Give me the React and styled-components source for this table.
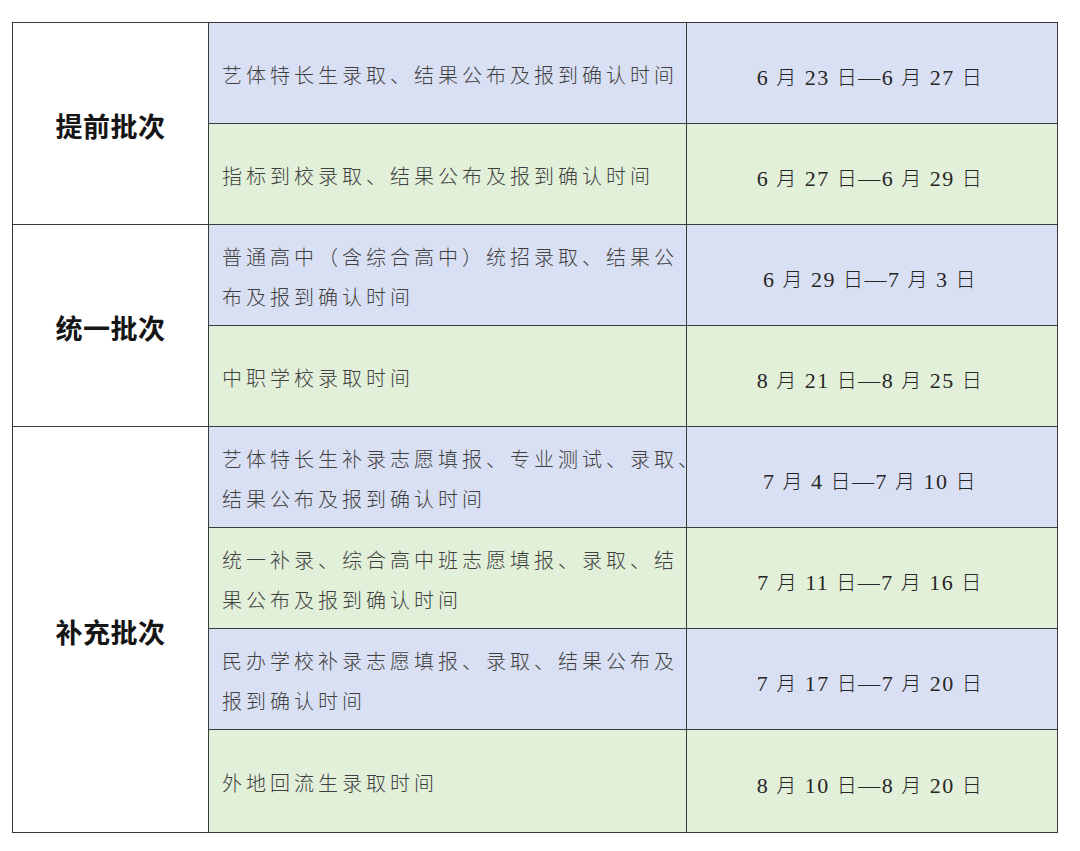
import React from "react";
import styled, { createGlobalStyle } from "styled-components";

const Global = createGlobalStyle`
  html, body { margin: 0; padding: 0; background: #ffffff; }
  body { font-family: "Noto Sans CJK SC", "Noto Sans", sans-serif; }
`;

const Page = styled.div`
  padding: 22px 0 0 12px;
`;

const Table = styled.table`
  border-collapse: collapse;
  table-layout: fixed;
  width: 1045px;
  border: 1.5px solid #555;
`;

const Cell = styled.td`
  border: 1px solid #3a3a3a;
  padding: 0;
  vertical-align: middle;
`;

const GroupCell = styled(Cell)`
  background: #ffffff;
  text-align: center;
  font-family: "Noto Sans CJK SC", sans-serif;
  font-weight: 700;
  font-size: 27px;
  color: #151515;
  letter-spacing: 0.5px;
  padding-top: 4px;
`;

const ItemCell = styled(Cell)`
  background: ${(p) => (p.$tone === "blue" ? "#dae0f3" : "#e2efd9")};
  height: ${(p) => p.$h - 5}px;
  padding: 4px 0 0 13px;
  font-family: "Noto Sans CJK SC", sans-serif;
  font-weight: 300;
  font-size: 20px;
  letter-spacing: 4px;
  color: #3f3f3f;
`;

const Line = styled.span`
  display: block;
  line-height: 40px;
  white-space: nowrap;
`;

const DateCell = styled(Cell)`
  background: ${(p) => (p.$tone === "blue" ? "#dae0f3" : "#e2efd9")};
  text-align: center;
  padding: 6px 4px 0 0;
  font-family: "Liberation Serif", "Noto Sans CJK SC", serif;
  font-size: 22px;
  letter-spacing: 1.5px;
  color: #262626;
`;

const Cjk = styled.span`
  font-family: "Noto Sans CJK SC", sans-serif;
  font-weight: 300;
  font-size: 20px;
`;

const groups = [
  {
    name: "提前批次",
    rows: [
      { lines: ["艺体特长生录取、结果公布及报到确认时间"], date: ["6", "23", "6", "27"] },
      { lines: ["指标到校录取、结果公布及报到确认时间"], date: ["6", "27", "6", "29"] },
    ],
  },
  {
    name: "统一批次",
    rows: [
      { lines: ["普通高中（含综合高中）统招录取、结果公", "布及报到确认时间"], date: ["6", "29", "7", "3"] },
      { lines: ["中职学校录取时间"], date: ["8", "21", "8", "25"] },
    ],
  },
  {
    name: "补充批次",
    rows: [
      { lines: ["艺体特长生补录志愿填报、专业测试、录取、", "结果公布及报到确认时间"], date: ["7", "4", "7", "10"] },
      { lines: ["统一补录、综合高中班志愿填报、录取、结", "果公布及报到确认时间"], date: ["7", "11", "7", "16"] },
      { lines: ["民办学校补录志愿填报、录取、结果公布及", "报到确认时间"], date: ["7", "17", "7", "20"] },
      { lines: ["外地回流生录取时间"], date: ["8", "10", "8", "20"], h: 103 },
    ],
  },
];

function DateText({ d }) {
  const [m1, d1, m2, d2] = d;
  return (
    <>
      {m1} <Cjk>月</Cjk> {d1} <Cjk>日</Cjk>—{m2} <Cjk>月</Cjk> {d2} <Cjk>日</Cjk>
    </>
  );
}

export default function App() {
  let idx = 0;
  return (
    <Page>
      <Global />
      <Table>
        <colgroup>
          <col style={{ width: "196px" }} />
          <col style={{ width: "478px" }} />
          <col style={{ width: "371px" }} />
        </colgroup>
        <tbody>
          {groups.map((g) =>
            g.rows.map((r, i) => {
              const tone = idx++ % 2 === 0 ? "blue" : "green";
              return (
                <tr key={g.name + i}>
                  {i === 0 && <GroupCell rowSpan={g.rows.length}>{g.name}</GroupCell>}
                  <ItemCell $tone={tone} $h={r.h || 101}>
                    {r.lines.map((l) => (
                      <Line key={l}>{l}</Line>
                    ))}
                  </ItemCell>
                  <DateCell $tone={tone}>
                    <DateText d={r.date} />
                  </DateCell>
                </tr>
              );
            })
          )}
        </tbody>
      </Table>
    </Page>
  );
}
